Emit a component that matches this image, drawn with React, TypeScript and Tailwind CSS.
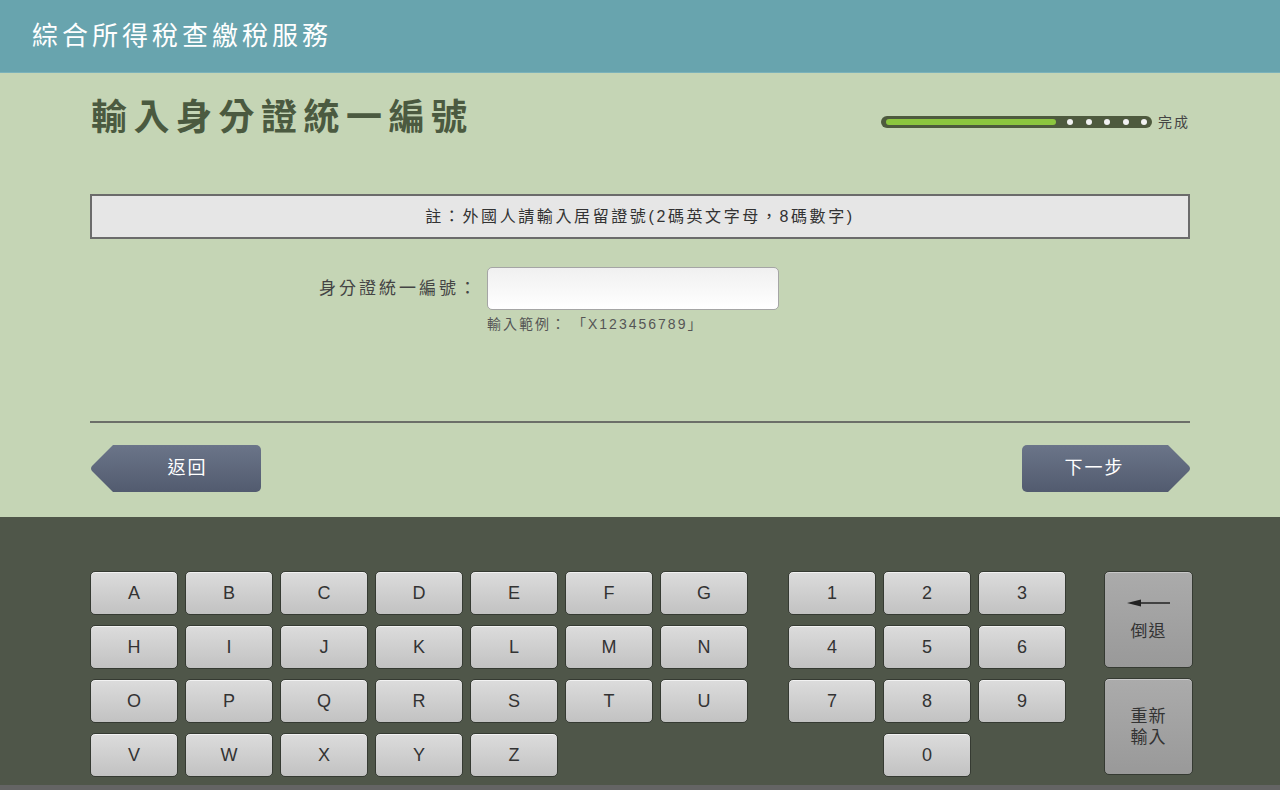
import React from 'react';

const FONT = { fontFamily: '"Liberation Sans", "Noto Sans CJK TC", sans-serif' };

const letters = ['A', 'B', 'C', 'D', 'E', 'F', 'G', 'H', 'I', 'J', 'K', 'L', 'M', 'N', 'O', 'P', 'Q', 'R', 'S', 'T', 'U', 'V', 'W', 'X', 'Y', 'Z'];
const numbers = ['1', '2', '3', '4', '5', '6', '7', '8', '9'];

const Key = ({ label, className = '' }: { label: string; className?: string }) => (
  <button
    className={`h-[44px] w-[88px] rounded-[5px] border border-[#353a32] bg-gradient-to-b from-[#dcdcdc] to-[#c2c2c2] text-[18px] text-[#333] shadow-[inset_0_1px_0_#f2f2f2] ${className}`}
  >
    {label}
  </button>
);

const Arrow = ({ dir }: { dir: 'left' | 'right' }) => (
  <svg width="24" height="47" viewBox="0 0 24 47" className="block shrink-0">
    <defs>
      <linearGradient id={`g-${dir}`} x1="0" y1="0" x2="0" y2="1">
        <stop offset="0" stopColor="#6b7589" />
        <stop offset="1" stopColor="#525b6f" />
      </linearGradient>
    </defs>
    {dir === 'left' ? (
      <path d="M24 0 L24 47 L23 47 L2 26 Q0 23.5 2 21 L23 0 Z" fill={`url(#g-${dir})`} />
    ) : (
      <path d="M0 0 L0 47 L1 47 L22 26 Q24 23.5 22 21 L1 0 Z" fill={`url(#g-${dir})`} />
    )}
  </svg>
);

export default function App() {
  return (
    <div className="w-[1280px] h-[790px] overflow-hidden bg-[#c5d5b5]" style={FONT}>
      {/* header */}
      <div className="h-[73px] bg-[#68a4ae] border-b border-[#7bb2ba] flex items-center pl-[32px]">
        <h1 className="text-[26px] tracking-[4px] text-white">綜合所得稅查繳稅服務</h1>
      </div>

      {/* main */}
      <div className="h-[444px] w-[1100px] mx-auto pt-[24px] flex flex-col">
        <div className="h-[42px] flex items-center justify-between">
          <h2 className="ml-[1px] text-[36px] font-bold tracking-[6.5px] text-[#4b5a40] leading-none">輸入身分證統一編號</h2>
          <div className="flex items-center mt-[8px]">
            <div className="h-[12px] w-[271px] rounded-full bg-[#4e5a3e] flex items-center pl-[5px]">
              <div className="h-[6px] w-[170px] rounded-full bg-[#8cc63f]" />
              <div className="flex gap-[12.5px] ml-[11px]">
                <span className="size-[6px] rounded-full bg-[#f2f2f2]" />
                <span className="size-[6px] rounded-full bg-[#f2f2f2]" />
                <span className="size-[6px] rounded-full bg-[#f2f2f2]" />
                <span className="size-[6px] rounded-full bg-[#f2f2f2]" />
                <span className="size-[6px] rounded-full bg-[#f2f2f2]" />
              </div>
            </div>
            <span className="ml-[6px] text-[14px] tracking-[2px] text-[#444]">完成</span>
          </div>
        </div>

        <div className="mt-[55px] h-[45px] border-2 border-[#6b6b6b] bg-[#e6e6e6] flex items-center justify-center text-[16px] tracking-[2.6px] text-[#333]">
          註：外國人請輸入居留證號(2碼英文字母，8碼數字)
        </div>

        <div className="mt-[28px] flex">
          <div className="w-[394px] h-[43px] flex items-center justify-end pr-[5px] text-[17px] tracking-[3px] text-[#444]">
            身分證統一編號：
          </div>
          <div className="ml-[3px]">
            <input
              className="block h-[43px] w-[292px] rounded-[5px] border border-[#a5a5a5] bg-gradient-to-b from-[#f0f0f0] to-white outline-none"
              aria-label="身分證統一編號"
            />
            <p className="mt-[6px] leading-[16px] text-[14px] text-[#555]">
              <span className="tracking-[2px]">輸入範例：</span>
              <span className="ml-[12px] tracking-[2px]">「X123456789」</span>
            </p>
          </div>
        </div>

        <div className="mt-[89px] h-[2px] bg-[#6c6f68]" />

        <div className="mt-[22px] flex justify-between">
          <button className="flex h-[47px]">
            <Arrow dir="left" />
            <span className="flex w-[147px] items-center justify-center rounded-r-[5px] bg-gradient-to-b from-[#6b7589] to-[#525b6f] text-[18px] tracking-[2px] text-white">
              返回
            </span>
          </button>
          <button className="flex h-[47px] -mr-[1px]">
            <span className="flex w-[145px] items-center justify-center rounded-l-[5px] bg-gradient-to-b from-[#6b7589] to-[#525b6f] text-[18px] tracking-[2px] text-white">
              下一步
            </span>
            <Arrow dir="right" />
          </button>
        </div>
      </div>

      {/* keyboard */}
      <div className="h-[268px] bg-[#4f5649] pt-[54px]">
        <div className="flex items-start pl-[90px]">
          <div className="grid grid-cols-[repeat(7,88px)] gap-x-[7px] gap-y-[10px]">
            {letters.map((l) => (
              <Key key={l} label={l} />
            ))}
          </div>
          <div className="ml-[40px] grid grid-cols-[repeat(3,88px)] gap-x-[7px] gap-y-[10px]">
            {numbers.map((n) => (
              <Key key={n} label={n} />
            ))}
            <Key label="0" className="col-start-2" />
          </div>
          <div className="ml-[38px] flex flex-col gap-[10px]">
            <button className="h-[97px] w-[89px] rounded-[5px] border border-[#353a32] bg-gradient-to-b from-[#ababab] to-[#999] shadow-[inset_0_1px_0_#c8c8c8] flex flex-col items-center text-[17px] text-[#333]">
              <svg width="44" height="8" viewBox="0 0 44 8" className="mt-[27px]">
                <path d="M0 4 L14 0.5 L14 3.3 L43 3.3 L43 4.7 L14 4.7 L14 7.5 Z" fill="#222" />
              </svg>
              <span className="mt-[12px] tracking-[1px]">倒退</span>
            </button>
            <button className="h-[97px] w-[89px] rounded-[5px] border border-[#353a32] bg-gradient-to-b from-[#ababab] to-[#999] shadow-[inset_0_1px_0_#c8c8c8] flex flex-col items-center justify-center text-[17px] leading-[21px] text-[#333]">
              <span className="tracking-[1px]">重新</span>
              <span className="tracking-[1px]">輸入</span>
            </button>
          </div>
        </div>
      </div>
      <div className="h-[5px] bg-[#646464]" />
    </div>
  );
}
